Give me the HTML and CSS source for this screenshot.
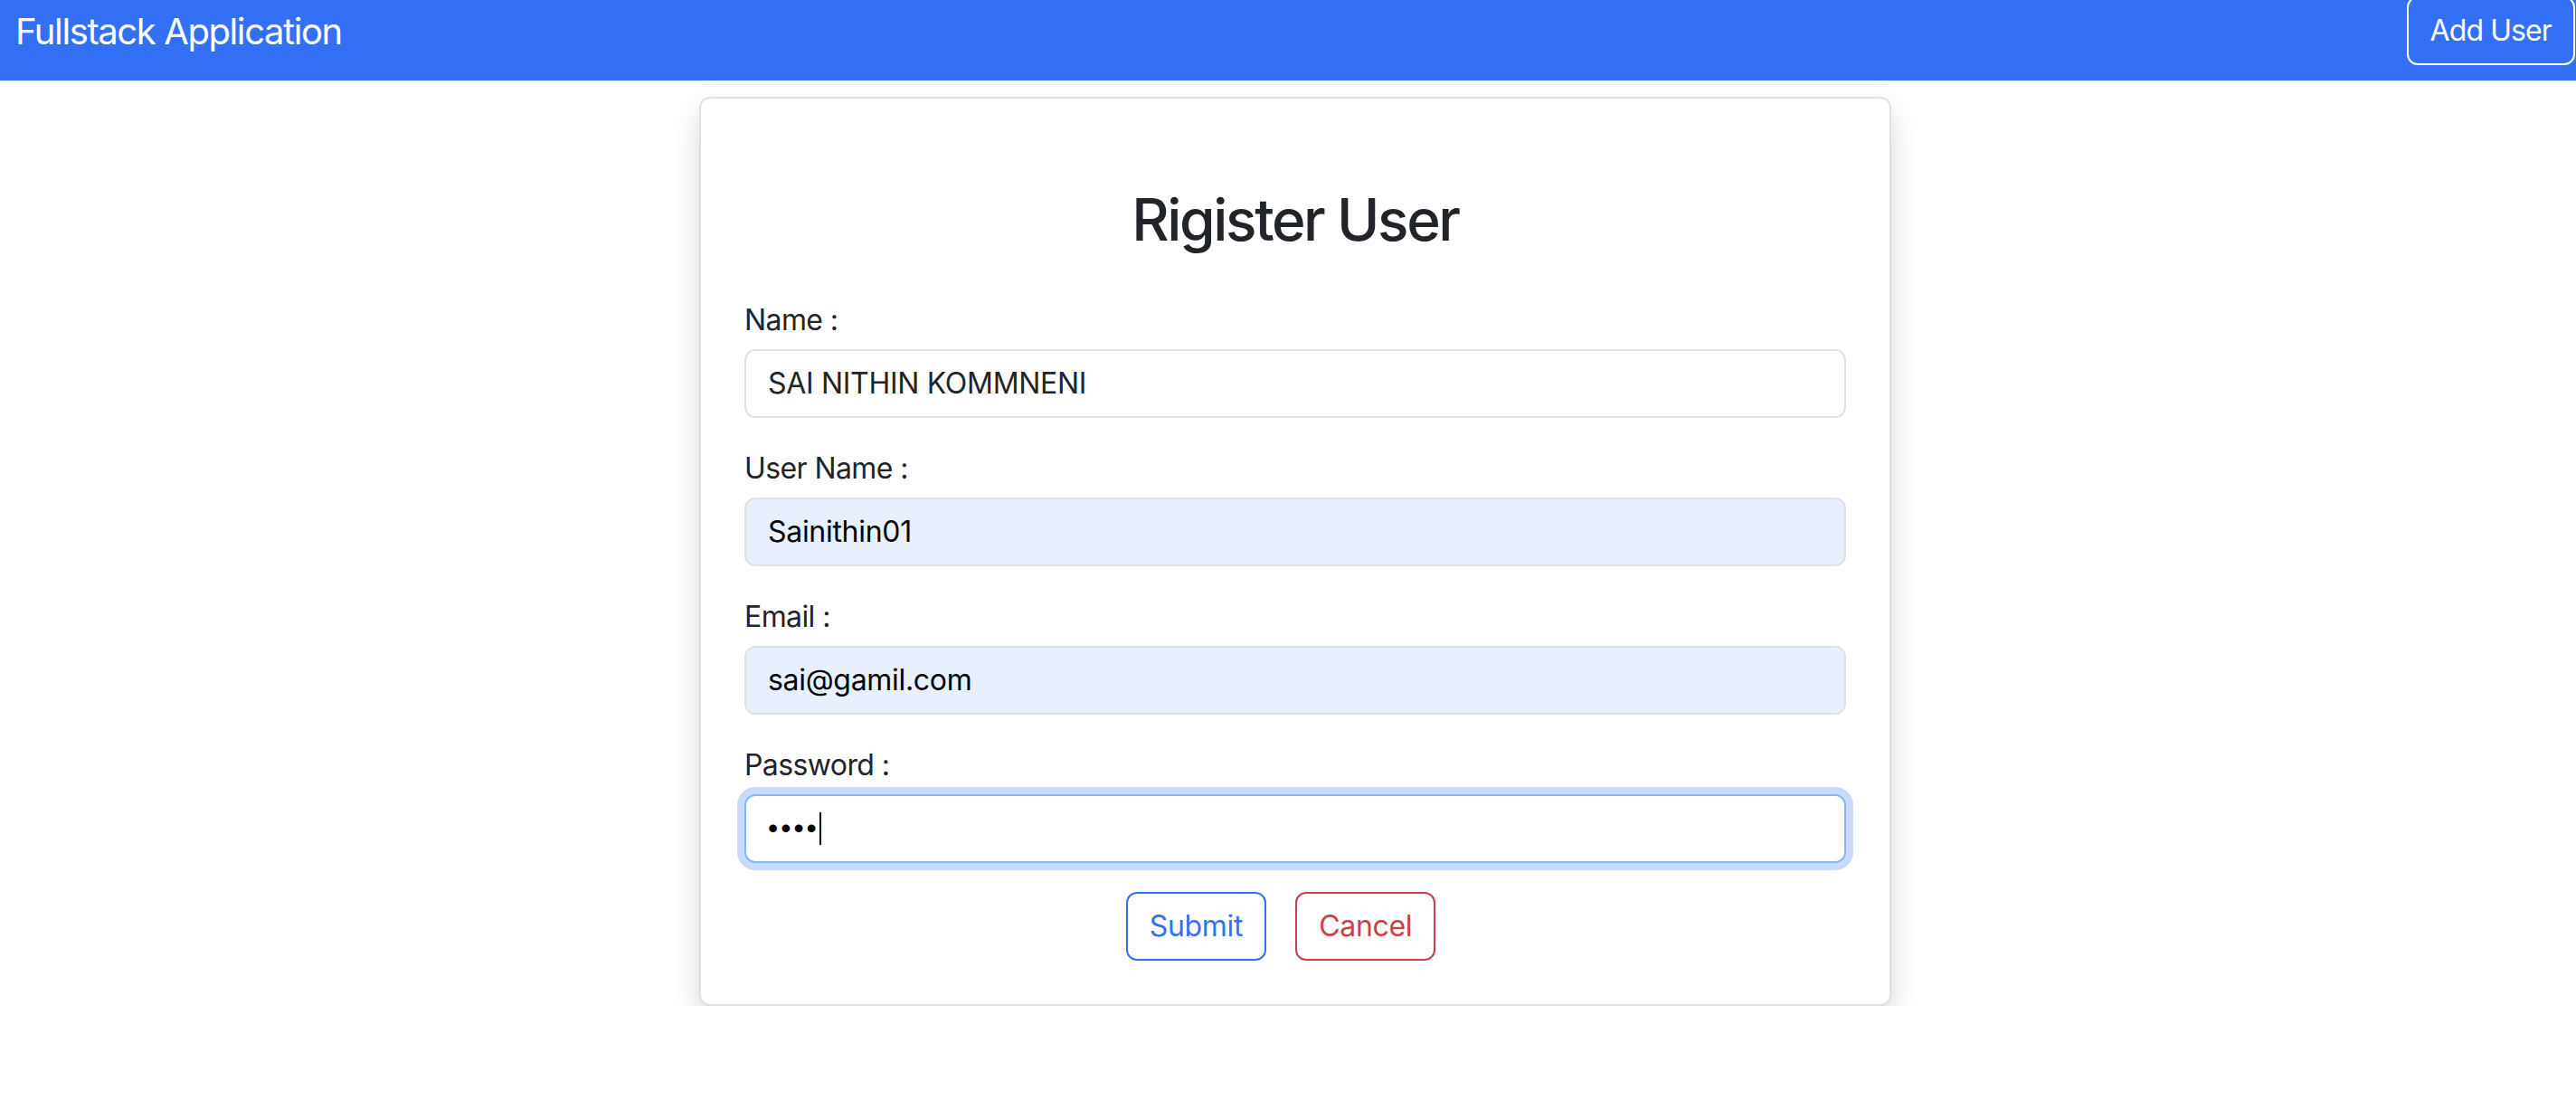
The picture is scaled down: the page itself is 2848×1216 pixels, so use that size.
FILE: index.html
```html
<!DOCTYPE html>
<html lang="en">
<head>
<meta charset="utf-8">
<title>Fullstack Application</title>
<link rel="stylesheet" href="styles.css">
</head>
<body>
<nav class="navbar">
  <a class="brand" href="#">Fullstack Application</a>
  <a class="btn-add" href="#">Add User</a>
</nav>
<main class="page">
  <div class="card">
    <h2 class="title">Rigister User</h2>
    <form class="form">
      <div class="field">
        <label class="label" for="name">Name :</label>
        <input class="control" id="name" type="text" value="SAI NITHIN KOMMNENI">
      </div>
      <div class="field">
        <label class="label" for="username">User Name :</label>
        <input class="control autofill" id="username" type="text" value="Sainithin01">
      </div>
      <div class="field">
        <label class="label" for="email">Email :</label>
        <input class="control autofill" id="email" type="text" value="sai@gamil.com">
      </div>
      <div class="field">
        <label class="label" for="password">Password :</label>
        <div class="control-wrap">
          <input class="control focused" id="password" type="password" value="1234">
          <span class="caret"></span>
        </div>
      </div>
      <div class="actions">
        <button class="btn btn-submit" type="button">Submit</button>
        <a class="btn btn-cancel" href="#">Cancel</a>
      </div>
    </form>
  </div>
</main>
</body>
</html>
```
FILE: styles.css
```css
* { box-sizing: border-box; }
html, body { margin: 0; padding: 0; background: #fff; }
body {
  font-family: Inter, "Noto Sans", "Liberation Sans", sans-serif;
  color: #212529;
}
.navbar {
  height: 89px;
  background: #3470f5;
  display: flex;
  align-items: flex-start;
  justify-content: space-between;
  padding: 0 1px 0 17px;
}
.brand {
  color: #fff;
  text-decoration: none;
  font-size: 40px;
  line-height: 60px;
  padding-top: 5px;
  letter-spacing: -1.4px;
}
.btn-add {
  margin-top: -4px;
  color: #fff;
  text-decoration: none;
  font-size: 32px;
  line-height: 48px;
  padding: 12px 24px;
  border: 2px solid #fff;
  border-radius: 12px;
  letter-spacing: -0.9px;
}
.page {
  padding-top: 18px;
  padding-left: 773px;
}
.card {
  width: 1318px;
  border: 2px solid #dee2e6;
  border-radius: 12px;
  padding: 48px;
  background: #fff;
  box-shadow: 0 16px 32px rgba(0, 0, 0, 0.15);
}
.title {
  margin: 48px;
  font-size: 64px;
  font-weight: 500;
  line-height: 1.2;
  text-align: center;
  color: #212529;
  letter-spacing: -2.4px;
}
.form { margin: 0; }
.field { margin-bottom: 32px; }
.label {
  display: block;
  font-size: 32px;
  line-height: 48px;
  margin-bottom: 8px;
  color: #212529;
  letter-spacing: -0.6px;
}
.control-wrap { position: relative; }
.control {
  display: block;
  width: 100%;
  height: 76px;
  padding: 12px 24px;
  font-family: inherit;
  font-size: 32px;
  line-height: 48px;
  color: #212529;
  background: #fff;
  border: 2px solid #dee2e6;
  border-radius: 12px;
  outline: none;
  letter-spacing: -0.3px;
}
.control.autofill {
  background: #e8f0fe;
  color: #000;
}
.control.focused {
  border-color: #86b7fe;
  box-shadow: 0 0 0 8px #c9dafc;
  color: #000;
  font-family: "Liberation Sans", Arial, sans-serif;
  letter-spacing: 3px;
}
.caret {
  position: absolute;
  left: 83px;
  top: 20px;
  width: 2px;
  height: 36px;
  background: #000;
}
.actions {
  display: flex;
  justify-content: center;
}
.btn {
  display: inline-block;
  font-family: inherit;
  font-size: 32px;
  line-height: 48px;
  padding: 12px 24px;
  border: 2px solid;
  border-radius: 12px;
  background: transparent;
  text-decoration: none;
  cursor: pointer;
  letter-spacing: -0.3px;
}
.btn-submit {
  color: #3470f5;
  border-color: #3470f5;
}
.btn-cancel {
  color: #cc3f47;
  border-color: #cc3f47;
  margin: 0 32px;
}
```
